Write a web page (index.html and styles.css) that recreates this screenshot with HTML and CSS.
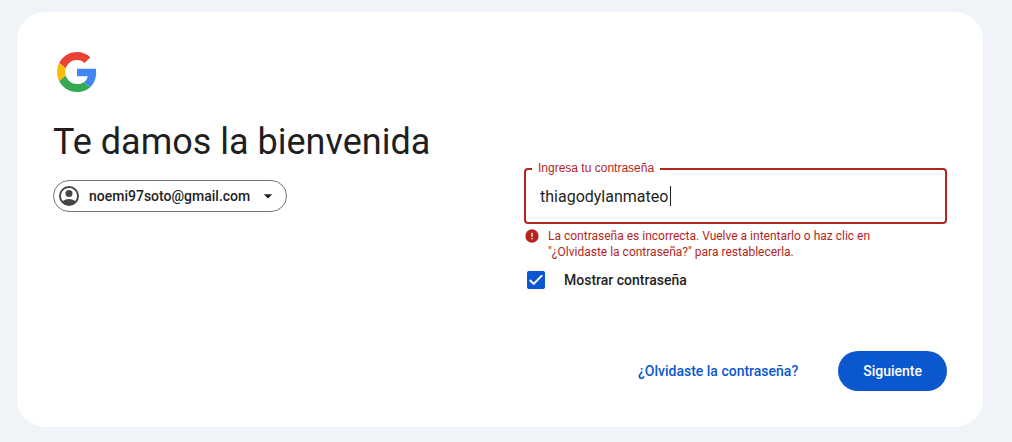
FILE: index.html
```html
<!DOCTYPE html>
<html lang="es">
<head>
<meta charset="utf-8">
<meta name="viewport" content="width=device-width, initial-scale=1">
<title>Te damos la bienvenida</title>
<link rel="stylesheet" href="styles.css">
</head>
<body>
<main class="card">
  <svg class="logo" viewBox="0 0 48 48" aria-hidden="true">
    <path fill="#ea4335" d="M24 9.5c3.54 0 6.71 1.22 9.21 3.6l6.85-6.85C35.9 2.38 30.47 0 24 0 14.62 0 6.51 5.38 2.56 13.22l7.98 6.19C12.43 13.72 17.74 9.5 24 9.5z"/>
    <path fill="#4285f4" d="M46.98 24.55c0-1.57-.15-3.09-.38-4.55H24v9.02h12.94c-.58 2.96-2.26 5.48-4.78 7.18l7.73 6c4.51-4.18 7.09-10.36 7.09-17.65z"/>
    <path fill="#fbbc05" d="M10.53 28.59c-.48-1.45-.76-2.99-.76-4.59s.27-3.14.76-4.59l-7.98-6.19C.92 16.46 0 20.12 0 24c0 3.88.92 7.54 2.56 10.78l7.97-6.19z"/>
    <path fill="#34a853" d="M24 48c6.48 0 11.93-2.13 15.89-5.81l-7.73-6c-2.15 1.45-4.92 2.3-8.16 2.3-6.26 0-11.57-4.22-13.47-9.91l-7.98 6.19C6.51 42.62 14.62 48 24 48z"/>
  </svg>
  <div class="columns">
    <section class="intro">
      <h1 class="title">Te damos la bienvenida</h1>
      <button class="account" type="button">
        <svg class="avatar" viewBox="0 0 24 24" aria-hidden="true"><path d="M12 2a10 10 0 1 0 0 20 10 10 0 0 0 0-20zm6.14 15.12A9.95 9.95 0 0 0 12 15a9.95 9.95 0 0 0-6.14 2.12A8 8 0 1 1 20 12a7.96 7.96 0 0 1-1.86 5.12z"/><circle cx="12" cy="9.5" r="3.5"/></svg>
        <span>noemi97soto@gmail.com</span>
        <svg class="arrow" viewBox="0 0 24 24" aria-hidden="true"><path d="M7 10l5 5 5-5z"/></svg>
      </button>
    </section>
    <form class="form">
      <div class="field">
        <label class="field-label" for="password">Ingresa tu contraseña</label>
        <input class="field-input" id="password" type="text" value="thiagodylanmateo" aria-invalid="true" aria-describedby="error">
        <span class="caret" aria-hidden="true"></span>
      </div>
      <div class="error" id="error">
        <svg class="error-icon" viewBox="0 0 24 24" aria-hidden="true"><path d="M12 2a10 10 0 1 0 0 20 10 10 0 0 0 0-20zm1 15h-2v-2h2v2zm0-4h-2V7h2v6z"/></svg>
        <span>La contraseña es incorrecta. Vuelve a intentarlo o haz clic en "¿Olvidaste la contraseña?" para restablecerla.</span>
      </div>
      <div class="show">
        <input class="check" id="show" type="checkbox" checked>
        <label for="show">Mostrar contraseña</label>
      </div>
    </form>
  </div>
  <div class="actions">
    <button class="button button-text" type="button">¿Olvidaste la contraseña?</button>
    <button class="button button-fill" type="button">Siguiente</button>
  </div>
</main>
</body>
</html>
```
FILE: styles.css
```css
* { box-sizing: border-box; }
body {
  margin: 0;
  padding: 12px 29px 15px 17px;
  background: #f0f4f9;
  color: #1f1f1f;
  font-family: Roboto, Arial, sans-serif;
  font-size: 14px;
}
.card {
  padding: 36px;
  background: #fff;
  border-radius: 28px;
}
.logo {
  display: block;
  width: 48px;
  height: 48px;
  padding: 4px;
}
.columns {
  display: grid;
  grid-template-columns: 1fr 1fr;
  gap: 48px;
}
.intro { padding-top: 24px; }
.title {
  margin: 0 0 16px;
  font-size: 36px;
  font-weight: 400;
  line-height: 44px;
  white-space: nowrap;
}
.account {
  display: inline-flex;
  align-items: center;
  height: 32px;
  padding: 0 8px 0 3px;
  border: 1px solid #747775;
  border-radius: 16px;
  background: #fff;
  color: #1f1f1f;
  font: 500 14px Roboto, sans-serif;
}
.avatar {
  width: 24px;
  height: 24px;
  margin-right: 8px;
  fill: #444746;
}
.arrow {
  width: 20px;
  height: 20px;
  margin-left: 8px;
  fill: #1f1f1f;
}
.form { padding-top: 72px; }
.field { position: relative; }
.field-label {
  position: absolute;
  top: -8px;
  left: 8px;
  padding: 0 6px;
  background: #fff;
  color: #b3261e;
  font: 12px/16px "Liberation Sans", Arial, sans-serif;
}
.field-input {
  display: block;
  width: 100%;
  height: 56px;
  padding: 0 14px;
  border: 2px solid #b3261e;
  border-radius: 4px;
  outline: 0;
  background: #fff;
  color: #1f1f1f;
  font: 16px Roboto, sans-serif;
}
.caret {
  position: absolute;
  top: 18px;
  left: 146px;
  width: 1px;
  height: 20px;
  background: #1f1f1f;
}
.error {
  display: flex;
  gap: 8px;
  padding: 4px 24px 0 0;
  color: #b3261e;
  font-size: 12px;
  line-height: 16px;
}
.error-icon {
  flex: none;
  width: 16px;
  height: 16px;
  fill: #b3261e;
}
.show {
  display: flex;
  align-items: center;
  gap: 19px;
  padding: 11px 0 0 3px;
  font-weight: 500;
  line-height: 18px;
}
.check {
  appearance: none;
  display: grid;
  place-items: center;
  width: 18px;
  height: 18px;
  margin: 0;
  border-radius: 2px;
  background: #fff;
  box-shadow: inset 0 0 0 2px #444746;
}
.check:checked {
  background: #0b57d0;
  box-shadow: none;
}
.check:checked::after {
  content: "";
  width: 14px;
  height: 11px;
  background: #fff;
  clip-path: polygon(0 56%, 10% 43%, 34% 72%, 90% 0, 100% 12%, 34% 98%);
}
.actions {
  display: flex;
  justify-content: flex-end;
  gap: 24px;
  padding-top: 62px;
}
.button {
  height: 40px;
  border: 0;
  border-radius: 20px;
  font: 500 14px Roboto, sans-serif;
}
.button-text {
  padding: 0 16px;
  background: none;
  color: #0b57d0;
}
.button-fill {
  padding: 0 25px;
  background: #0b57d0;
  color: #fff;
}
```
